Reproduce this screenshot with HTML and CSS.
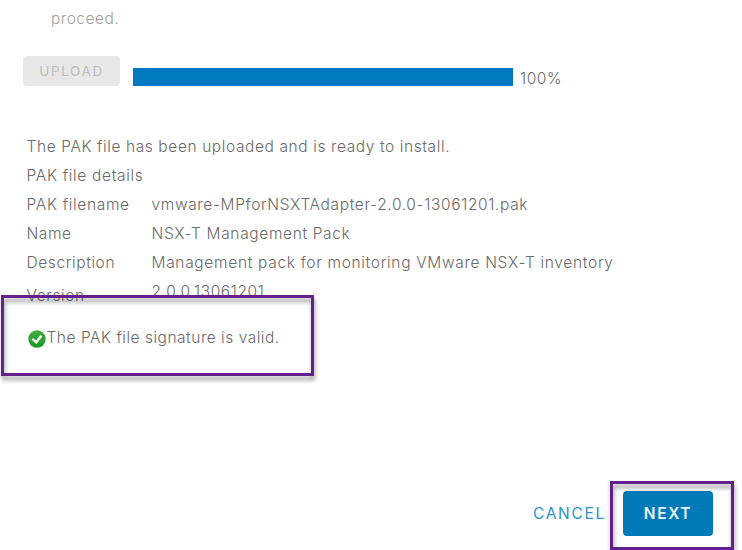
FILE: index.html
```html
<!DOCTYPE html>
<html lang="en">
<head>
<meta charset="utf-8">
<title>Add Solution</title>
<link rel="stylesheet" href="styles.css">
</head>
<body>
<main class="wizard">
  <p class="hint">proceed.</p>
  <div class="upload-row">
    <button class="upload" disabled>UPLOAD</button>
    <div class="progress"></div>
    <span class="percent">100%</span>
  </div>
  <section class="details">
    <p class="status">The PAK file has been uploaded and is ready to install.</p>
    <p class="heading">PAK file details</p>
    <dl class="fields">
      <dt class="l-file">PAK filename</dt><dd class="v-file">vmware-MPforNSXTAdapter-2.0.0-13061201.pak</dd>
      <dt class="l-name">Name</dt><dd class="v-name">NSX-T Management Pack</dd>
      <dt class="l-desc">Description</dt><dd class="v-desc">Management pack for monitoring VMware NSX-T inventory</dd>
      <dt class="l-version">Version</dt><dd class="v-version">2.0.0.13061201</dd>
    </dl>
  </section>
  <div class="signature">
    <svg class="check" viewBox="0 0 18 18" aria-hidden="true">
      <defs><linearGradient id="g" x1="0" y1="0" x2="0" y2="1"><stop offset="0" stop-color="#42ae45"/><stop offset="1" stop-color="#169a20"/></linearGradient></defs>
      <circle cx="9" cy="9" r="8.7" fill="url(#g)"/>
      <path d="M4.4 8.8 8.2 12.2 13.4 5.8" fill="none" stroke="#fff" stroke-width="2.4"/>
    </svg>
    <span class="signature-text">The PAK file signature is valid.</span>
    <span class="highlight"></span>
  </div>
  <footer class="actions">
    <button class="cancel">CANCEL</button>
    <div class="next-wrap"><button class="next">NEXT</button><span class="highlight"></span></div>
  </footer>
</main>
</body>
</html>
```
FILE: styles.css
```css
* { box-sizing: border-box; }
body {
  margin: 0;
  background: #fff;
  color: #6a6a6a;
  font: 300 15.5px/29px Inter, Lato, "Liberation Sans", sans-serif;
  letter-spacing: 0.6px;
}
p, dl, dd { margin: 0; }
button { border: 0; padding: 0; font: inherit; white-space: nowrap; }
.wizard {
  display: flex;
  flex-direction: column;
  width: 742px;
  height: 550px;
  overflow: hidden;
  white-space: nowrap;
}
.hint { height: 56px; padding: 4px 0 0 51px; color: #a0a0a0; letter-spacing: 0.5px; }
.upload-row { display: flex; height: 76px; padding-left: 23px; }
.upload {
  width: 97px;
  height: 30px;
  border-radius: 4px;
  background: #e8e8e8;
  color: #bdbdbd;
  font-size: 13.5px;
  font-weight: 400;
  line-height: 30px;
  letter-spacing: 1.6px;
}
.progress { width: 380px; height: 18px; margin: 12px 7px 0 13px; background: #0079c1; }
.percent { padding-top: 8px; }
.details { height: 163px; padding-left: 26.5px; }
.status, .heading { height: 29px; }
.heading, .v-desc, .l-file { letter-spacing: 0.68px; }
.v-file, .v-name { letter-spacing: 0.64px; }
.fields {
  display: grid;
  grid-template-columns: 125px 1fr;
  grid-template-rows: 29px 29px 28.5px 29px;
}
.l-version { padding-top: 4px; }
.signature {
  position: relative;
  display: flex;
  align-items: center;
  width: 313px;
  height: 81px;
  margin-left: 1px;
  padding-left: 26.5px;
}
.check { width: 18px; height: 18px; margin: 6px 1px 0 0; }
.signature-text { padding-top: 3px; letter-spacing: 0.52px; }
.highlight {
  position: absolute;
  inset: 0;
  border: 3px solid #64208a;
  filter: drop-shadow(1px 4px 2px rgba(0, 0, 0, 0.4));
}
.actions {
  display: flex;
  justify-content: flex-end;
  height: 69px;
  margin-top: 105px;
  padding-right: 8px;
}
.cancel {
  width: 77px;
  height: 45px;
  margin-top: 10px;
  background: none;
  color: #2e91c8;
  font-weight: 400;
  line-height: 45px;
  letter-spacing: 1.7px;
  text-align: left;
}
.next-wrap { position: relative; width: 124px; height: 69px; padding: 10px 0 0 13px; }
.next {
  display: block;
  width: 90px;
  height: 45px;
  border-radius: 4px;
  background: #0079b8;
  color: #e8f4fb;
  font-weight: 600;
  line-height: 45px;
  letter-spacing: 1.6px;
}
```
